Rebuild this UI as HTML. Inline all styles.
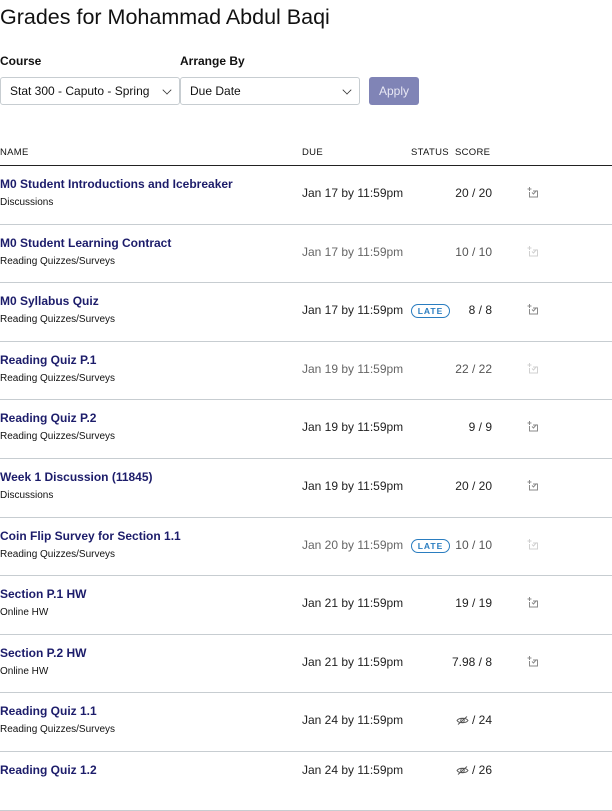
<!DOCTYPE html>
<html><head><meta charset="utf-8"><style>
*{box-sizing:border-box;margin:0;padding:0}
body{width:612px;height:792px;overflow:hidden;background:#fff;font-family:"Liberation Sans",sans-serif;color:#111;position:relative}
.a{position:absolute;white-space:nowrap}
h1{position:absolute;left:0;top:5px;font-size:21.5px;font-weight:normal;color:#111}
.lbl{font-size:12px;font-weight:bold;top:54px}
.sel{position:absolute;top:77px;height:28px;border:1px solid #c7cdd1;border-radius:3px;font-size:12px;padding:6px 9px;background:#fff}
.chev{position:absolute;right:8px;top:8px;width:8px;height:8px;border-right:1.2px solid #333;border-bottom:1.2px solid #333;transform:rotate(45deg) scale(.8)}
.btn{position:absolute;left:369px;top:77px;width:50px;height:28px;background:#8084b6;color:#e8e8f4;border-radius:3px;font-size:12px;text-align:center;line-height:28px}
.th{top:147px;font-size:9.5px;letter-spacing:.3px;color:#111}
.hl{position:absolute;left:0;top:165px;width:612px;height:1px;background:#222}
.row{position:absolute;left:0;width:612px;height:58.6px;border-bottom:1px solid #c7cdd1}
.t{position:absolute;left:0;top:11px;font-size:12px;font-weight:bold;color:#1c1c6a}
.c{position:absolute;left:0;top:31px;font-size:10px;color:#111}
.d{position:absolute;left:302px;top:20px;font-size:12px;color:#222}
.g .d{color:#666}
.s{position:absolute;right:120px;top:20px;font-size:12px;color:#222;text-align:right}
.g .s{color:#555}
.late{position:absolute;left:411px;top:21px;width:39px;height:14px;border:1px solid #2a7dc0;border-radius:8px;color:#2a7dc0;font-size:8.5px;font-weight:bold;letter-spacing:1px;text-align:center;line-height:12px}
.ic{position:absolute;left:527px;top:20px}
</style></head><body>
<h1>Grades for Mohammad Abdul Baqi</h1>
<div class="a lbl" style="left:0">Course</div>
<div class="a lbl" style="left:180px">Arrange By</div>
<div class="sel" style="left:0;width:180px">Stat 300 - Caputo - Spring<span class="chev"></span></div>
<div class="sel" style="left:180px;width:180px">Due Date<span class="chev"></span></div>
<div class="btn">Apply</div>
<div class="a th" style="left:0">NAME</div>
<div class="a th" style="left:302px">DUE</div>
<div class="a th" style="left:411px">STATUS</div>
<div class="a th" style="left:455px">SCORE</div>
<div class="hl"></div>
<div id="rows"></div>
<script>
var R=[["M0 Student Introductions and Icebreaker","Discussions","Jan 17","20 / 20",0,0,1],
["M0 Student Learning Contract","Reading Quizzes/Surveys","Jan 17","10 / 10",1,0,1],
["M0 Syllabus Quiz","Reading Quizzes/Surveys","Jan 17","8 / 8",0,1,1],
["Reading Quiz P.1","Reading Quizzes/Surveys","Jan 19","22 / 22",1,0,1],
["Reading Quiz P.2","Reading Quizzes/Surveys","Jan 19","9 / 9",0,0,1],
["Week 1 Discussion (11845)","Discussions","Jan 19","20 / 20",0,0,1],
["Coin Flip Survey for Section 1.1","Reading Quizzes/Surveys","Jan 20","10 / 10",1,1,1],
["Section P.1 HW","Online HW","Jan 21","19 / 19",0,0,1],
["Section P.2 HW","Online HW","Jan 21","7.98 / 8",0,0,1],
["Reading Quiz 1.1","Reading Quizzes/Surveys","Jan 24","E / 24",0,0,0],
["Reading Quiz 1.2","","Jan 24","E / 26",0,0,0]];
var eye='<svg width="13" height="9" viewBox="0 0 13 9" style="vertical-align:-1px"><path d="M1 4.5C3 1.5 10 1.5 12 4.5C10 7.5 3 7.5 1 4.5Z" fill="none" stroke="#555" stroke-width="0.9"/><circle cx="6.5" cy="4.5" r="1.8" fill="none" stroke="#555" stroke-width="0.9"/><path d="M2 8.5L11 .5" stroke="#555" stroke-width="0.9"/></svg>';
var h='';
R.forEach(function(r,i){
 var top=166+i*58.6;
 var col=r[4]?'#d0d0d0':'#8a8a8a';
 var ic='<svg class="ic" width="12" height="12" viewBox="0 0 12 12"><path d="M2.5 1v4M0.5 3h4M2.5 6v5h8V5H6" fill="none" stroke="'+col+'" stroke-width="1"/><path d="M5 6.5l1.5 1.5L9.5 4.5" fill="none" stroke="'+col+'" stroke-width="1"/></svg>';
 var s=r[3].replace('E',eye);
 var dt=r[1]?'':' style="top:11px"';
 h+='<div class="row'+(r[4]?' g':'')+'" style="top:'+top+'px"><div class="t">'+r[0]+'</div><div class="c">'+r[1]+'</div><div class="d"'+dt+'>'+r[2]+' by 11:59pm</div>'+(r[5]?'<div class="late">LATE</div>':'')+'<div class="s"'+dt+'>'+s+'</div>'+(r[6]?ic:'')+'</div>';
});
document.getElementById('rows').innerHTML=h;
</script>
</body></html>
